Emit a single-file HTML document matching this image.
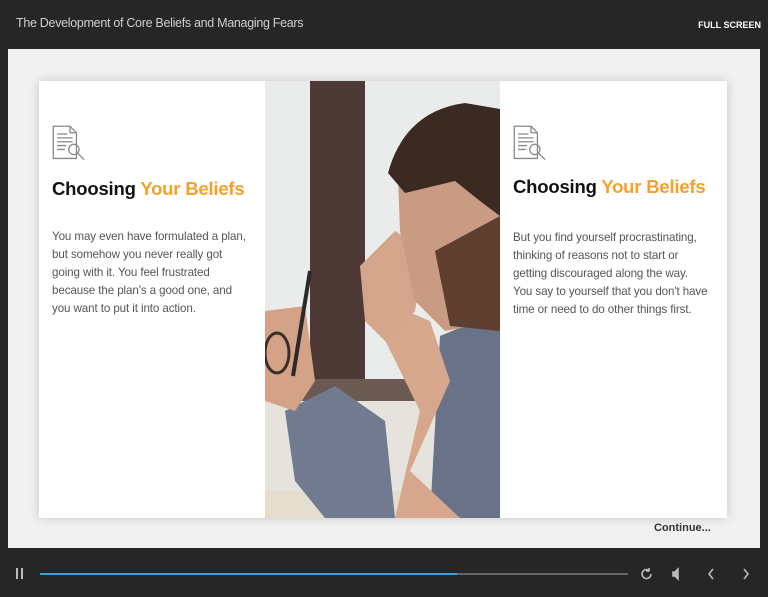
<!DOCTYPE html>
<html><head><style>
*{margin:0;padding:0;box-sizing:border-box}
body{width:768px;height:597px;background:#262626;font-family:"Liberation Sans",sans-serif;position:relative;overflow:hidden}
.title{position:absolute;left:16px;top:16px;color:#cfcfcf;font-size:12.5px;letter-spacing:-0.3px}
.fs{position:absolute;right:7px;top:20px;color:#fff;font-size:9px;font-weight:bold}
.stage{position:absolute;left:8px;top:49px;width:752px;height:499px;background:#f1f1f1}
.card{position:absolute;left:39px;top:81px;width:688px;height:437px;background:#fff;box-shadow:0 0 10px rgba(0,0,0,.18)}
.panel{position:absolute;top:0;width:226px;height:437px}
.panel svg.ic{position:absolute;left:13px;top:44px}
.panel h2{position:absolute;left:13px;top:97px;font-size:18.5px;font-weight:bold;color:#111;white-space:nowrap;letter-spacing:-0.2px}
.panel h2 span{color:#f7a12a}
.panel p{position:absolute;left:13px;width:215px;font-size:11.6px;line-height:18px;color:#555;white-space:nowrap;letter-spacing:-0.1px}
.cont{position:absolute;left:654px;top:522px;font-size:11px;font-weight:bold;color:#333}
.bar{position:absolute;left:40px;top:573px;width:588px;height:2px;background:#666}
.bar div{width:417px;height:2px;background:#3ba3d8}
</style></head><body>
<div class="title">The Development of Core Beliefs and Managing Fears</div>
<div class="fs">FULL SCREEN</div>
<div class="stage"></div>
<div class="card">
 <div class="panel" style="left:0">
  <svg class="ic" width="36" height="36" viewBox="0 0 28 28" fill="none" stroke="#888" stroke-width="1"><path d="M1 1h13l5 5v20H1z M14 1v5h5"/><path d="M4 7h8M4 10h12M4 13h12M4 16h7M4 19h6"/><circle cx="17" cy="19" r="4"/><path d="M20 22l5 5"/></svg>
  <h2>Choosing <span>Your Beliefs</span></h2>
  <p style="top:147px">You may even have formulated a plan,<br>but somehow you never really got<br>going with it. You feel frustrated<br>because the plan's a good one, and<br>you want to put it into action.</p>
 </div>
 <svg style="position:absolute;left:226px;top:0" width="235" height="437" viewBox="0 0 235 437">
  <rect width="235" height="437" fill="#e9ecea"/>
  <rect x="45" y="0" width="55" height="305" fill="#4d3a36"/>
  <rect x="0" y="298" width="235" height="22" fill="#6a5a52"/>
  <rect x="0" y="320" width="235" height="95" fill="#e6e3df"/>
  <rect x="0" y="410" width="170" height="27" fill="#e4dccd"/>
  <path d="M175 255 L235 230 L235 437 L165 437 Z" fill="#6a7288"/>
  <path d="M20 330 L70 305 L120 340 L130 437 L60 437 L30 400 Z" fill="#727a90"/>
  <path d="M145 390 L185 300 L165 240 L130 225 L118 255 L155 330 L130 437 L195 437 Z" fill="#d6a78c"/>
  <path d="M95 185 L130 150 L160 170 L150 230 L120 260 L100 240 Z" fill="#d4a58a"/>
  <path d="M133 95 L235 70 L235 240 L180 250 L150 220 L135 150 Z" fill="#c99b82"/>
  <path d="M170 170 L235 135 L235 250 L185 245 Z" fill="#5e3e2e"/>
  <path d="M123 92 Q140 30 200 22 L235 28 L235 135 L215 120 L190 100 L140 112 Z" fill="#3a2a22"/>
  <path d="M0 230 L40 225 L50 300 L30 330 L0 320 Z" fill="#d3a287"/>
  <path d="M45 190 L28 295" stroke="#2a2a2a" stroke-width="4"/>
  <ellipse cx="12" cy="272" rx="12" ry="20" fill="none" stroke="#3a2e28" stroke-width="3"/>
 </svg>
 <div class="panel" style="left:461px">
  <svg class="ic" width="36" height="36" viewBox="0 0 28 28" fill="none" stroke="#888" stroke-width="1"><path d="M1 1h13l5 5v20H1z M14 1v5h5"/><path d="M4 7h8M4 10h12M4 13h12M4 16h7M4 19h6"/><circle cx="17" cy="19" r="4"/><path d="M20 22l5 5"/></svg>
  <h2 style="top:95px">Choosing <span>Your Beliefs</span></h2>
  <p style="top:148px">But you find yourself procrastinating,<br>thinking of reasons not to start or<br>getting discouraged along the way.<br>You say to yourself that you don't have<br>time or need to do other things first.</p>
 </div>
</div>
<div class="cont">Continue...</div>
<svg style="position:absolute;left:15px;top:567px" width="10" height="14"><rect x="1" y="1" width="2" height="11" fill="#bbb"/><rect x="6" y="1" width="2" height="11" fill="#bbb"/></svg>
<div class="bar"><div></div></div>
<svg style="position:absolute;left:640px;top:567px" width="120" height="14" fill="none" stroke="#bbb" stroke-width="1.6">
 <path d="M11 7a4.5 4.5 0 1 1-2-3.7"/><path d="M9 1v3h-3" />
 <path d="M33 5h2l3-3v10l-3-3h-2z" fill="#bbb"/>
 <path d="M73 2l-4 5 4 5"/>
 <path d="M104 2l4 5-4 5"/>
</svg>
</body></html>
